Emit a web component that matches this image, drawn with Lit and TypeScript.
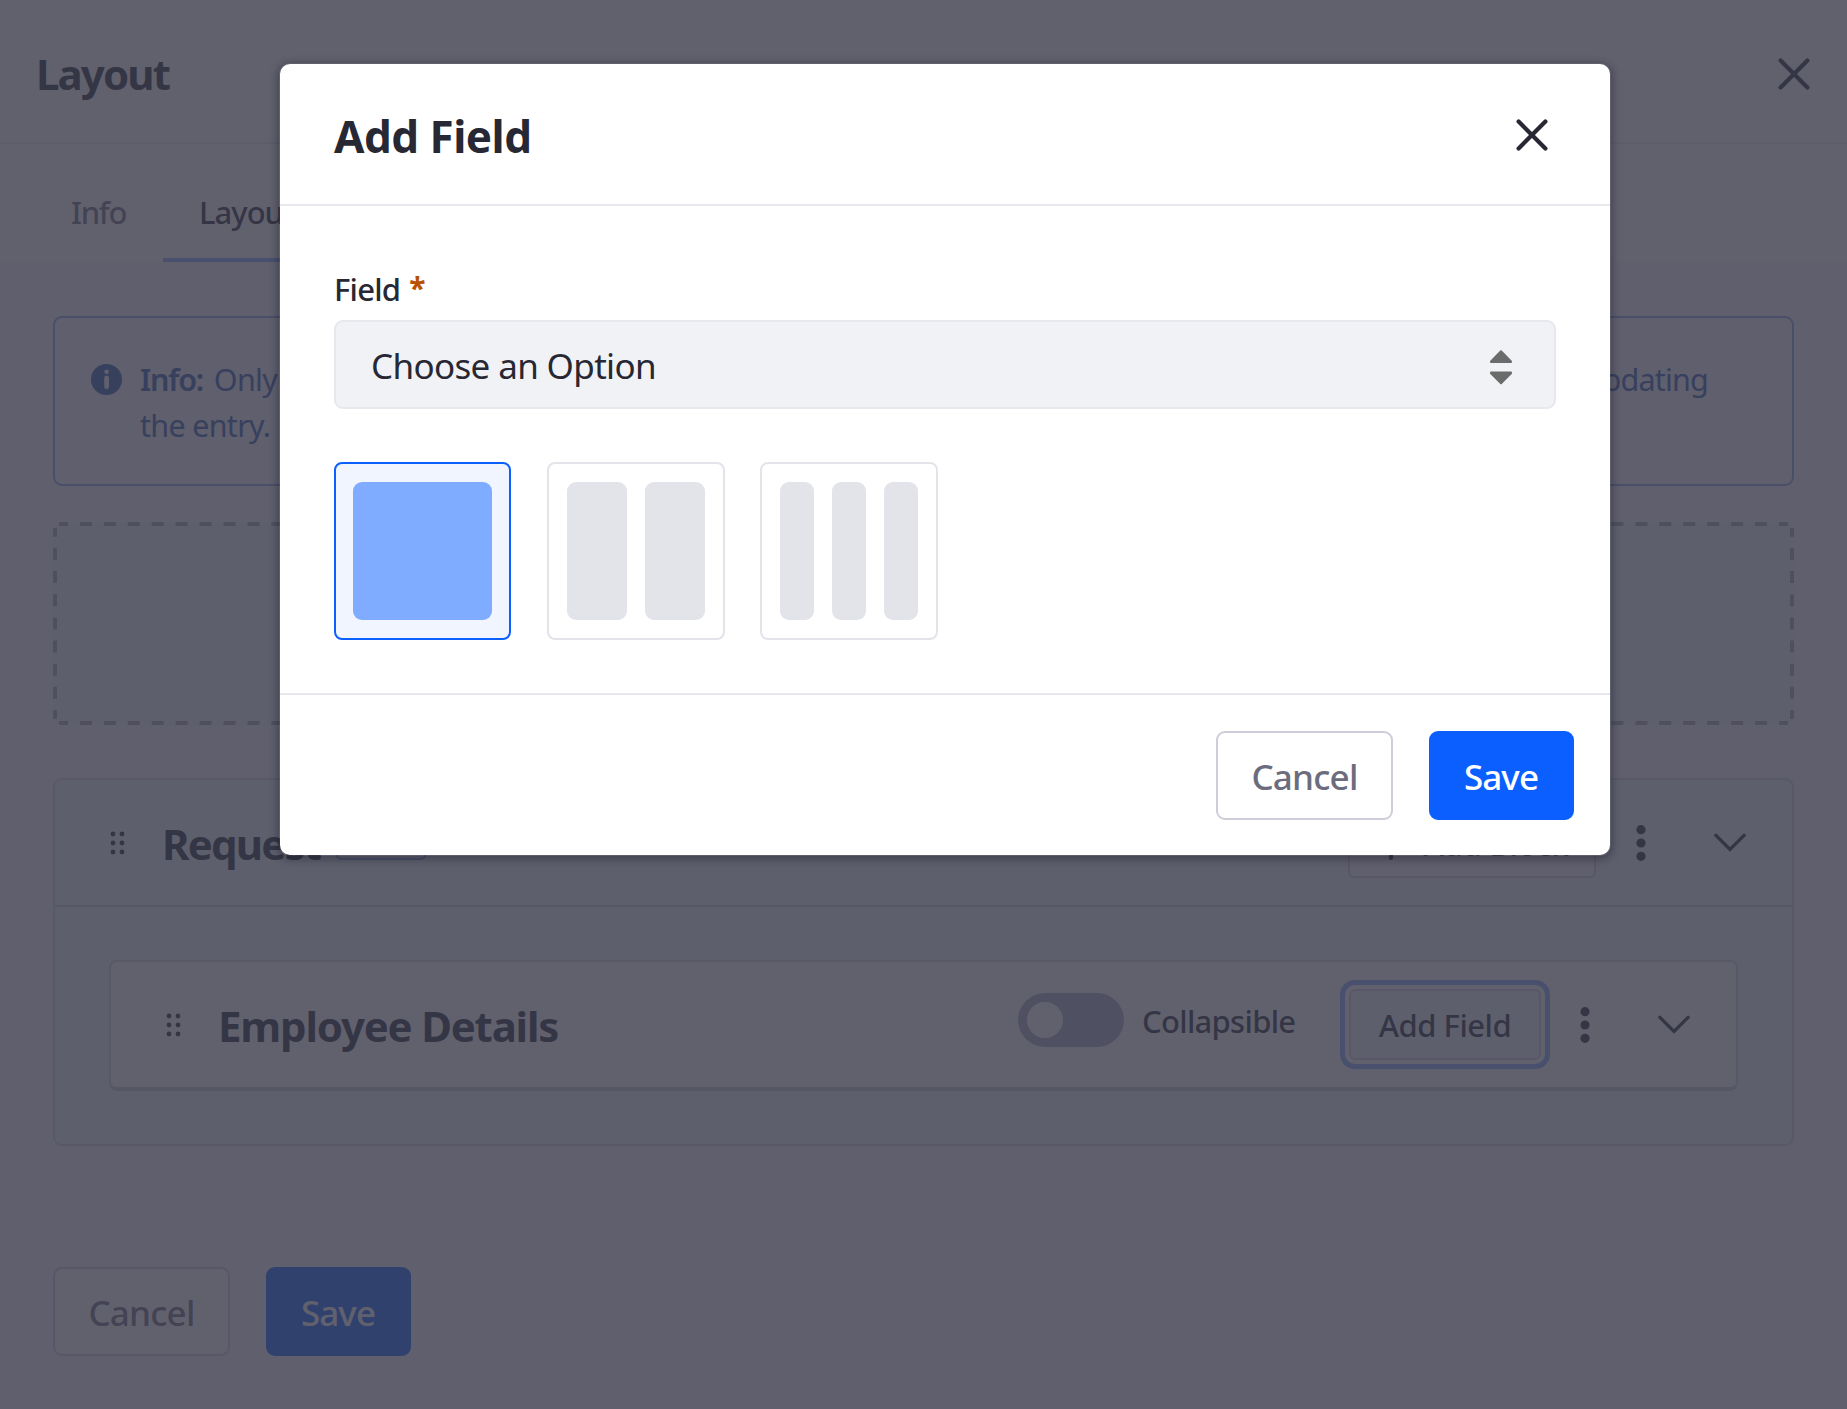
import { LitElement, html, css, svg } from 'lit';
import { customElement, property, state } from 'lit/decorators.js';
import { classMap } from 'lit/directives/class-map.js';

const closeIcon = html`<svg class="icon-close" width="32" height="32" viewBox="0 0 32 32" fill="none" stroke="currentColor" stroke-width="4.2" stroke-linecap="round">
  <path d="M2.6 2.6 29.4 29.4M29.4 2.6 2.6 29.4" />
</svg>`;

const infoIcon = html`<svg class="icon-info" width="31" height="31" viewBox="0 0 31 31">
  <circle cx="15.5" cy="15.5" r="15.5" fill="currentColor" />
  <circle class="cutout" cx="15.6" cy="7.8" r="2.3" />
  <rect class="cutout" x="13.2" y="11.6" width="4.8" height="13.6" rx="2.4" />
</svg>`;

const dragIcon = html`<svg width="16" height="24" viewBox="0 0 16 24" fill="currentColor">
  ${[3, 12, 21].map((y) => svg`<circle cx="3" cy=${y} r="2.4" /><circle cx="12" cy=${y} r="2.4" />`)}
</svg>`;

const kebabIcon = html`<svg width="10" height="36" viewBox="0 0 10 36" fill="currentColor">
  ${[4.7, 18, 31.3].map((y) => svg`<circle cx="5" cy=${y} r="4.6" />`)}
</svg>`;

const chevronIcon = html`<svg width="32" height="20" viewBox="0 0 32 20" fill="none" stroke="currentColor" stroke-width="3.4" stroke-linecap="round" stroke-linejoin="miter">
  <path d="M1.9 2.4 16 16.4 30.1 2.4" />
</svg>`;

const plusIcon = html`<svg width="32" height="34" viewBox="0 0 32 34" stroke="currentColor" stroke-width="4" stroke-linecap="round">
  <path d="M16 2V32M2 17H30" />
</svg>`;

const sortIcon = html`<svg class="icon-sort" width="24" height="36" viewBox="0 0 24 36" fill="#6b6b6b" stroke="#6b6b6b" stroke-width="2" stroke-linejoin="round">
  <path d="M12 2.2 22 12.4V13H2V12.4Z" />
  <path d="M12 34.4 22 24.2V23.6H2V24.2Z" />
</svg>`;

const shared = css`
  * { box-sizing: border-box; }
  svg { display: block; flex: none; }
  .btn {
    display: flex;
    align-items: center;
    justify-content: center;
    height: 89px;
    padding-top: 2px;
    border: 2px solid #cdced9;
    border-radius: 9px;
    background: #fff;
    color: #6b6c7e;
    font: 500 35px/48px "Noto Sans", "Open Sans", sans-serif;
    letter-spacing: -0.8px;
  }
  .btn-cancel { width: 177px; }
  .btn-save {
    width: 145px;
    padding-right: 1px;
    border-color: #0b5fff;
    background: #0b5fff;
    color: #fff;
    letter-spacing: -0.9px;
  }
`;

@customElement('layout-page')
class LayoutPage extends LitElement {
  static styles = [shared, css`
    :host {
      display: flex;
      flex-direction: column;
      height: 100%;
      background: #f6f2f8;
      color: #272833;
    }
    .header {
      display: flex;
      align-items: center;
      justify-content: space-between;
      height: 144px;
      padding: 0 37px 0 36px;
      border-bottom: 2px solid #e3e3ea;
      background: #fff;
    }
    .header-title {
      font-size: 42px;
      font-weight: 700;
      letter-spacing: -1.9px;
      padding-top: 4px;
    }
    .header .icon-close { margin-top: 5px; }
    .tabs {
      display: flex;
      height: 118px;
      background: #fff;
      padding-left: 34px;
      font-size: 31px;
      font-weight: 500;
    }
    .tab {
      padding: 47px 36px 0 37px;
      line-height: 42px;
      color: #6b6c7e;
      border-bottom: 4px solid transparent;
      letter-spacing: -1.3px;
      width: 129px;
    }
    .tab-active {
      width: 164px;
      padding-left: 36px;
      letter-spacing: -1px;
      color: #272833;
      border-color: #80acff;
    }
    .alert {
      display: flex;
      gap: 18px;
      height: 170px;
      margin: 54px 53px 0;
      padding: 38px 36px;
      border: 2px solid #89a7e0;
      border-radius: 9px;
      color: #2e5aac;
      font-size: 30.5px;
      line-height: 46px;
    }
    .alert .icon-info { margin-top: 8px; }
    .cutout { fill: #f6f2f8; }
    .alert-line { display: flex; width: 1568px; letter-spacing: -0.7px; }
    .alert-line strong { font-weight: 600; margin-right: 11px; letter-spacing: -1.3px; }
    .alert-line .last { margin-left: auto; letter-spacing: -0.8px; }
    .dropzone { height: 203px; margin: 36px 53px 0; border-radius: 8px; background: #eef5f9; overflow: hidden; }
    .sheet {
      height: 368px;
      margin: 53px 53px 0;
      border: 2px solid #d3d0dc;
      border-radius: 9px;
      background: #eef5f9;
    }
    .sheet-header {
      display: flex;
      align-items: center;
      height: 127px;
      padding: 0 46px 0 55px;
      border-bottom: 2px solid #ccc9d6;
    }
    .title {
      padding-top: 2px;
      font-size: 42px;
      font-weight: 700;
      letter-spacing: -1.2px;
      margin-left: 36px;
    }
    .sheet-header .title { width: 160px; letter-spacing: -1.8px; }
    .tag { width: 90px; height: 40px; margin-left: 14px; margin-top: -5px; border: 2px solid #89a0dc; border-radius: 5px; }
    .spacer { flex: 1; }
    .btn-sm {
      display: flex;
      align-items: center;
      justify-content: center;
      height: 71px;
      border: 2px solid #cfccd9;
      border-radius: 6px;
      font-size: 31px;
      font-weight: 500;
      letter-spacing: -0.5px;
      padding-top: 1px;
    }
    .btn-block { width: 248px; gap: 16px; background: #f6f2f8; }
    .btn-block span { padding-top: 2px; letter-spacing: -0.2px; }
    .kebab { margin-left: 40px; }
    .chevron { margin-left: 68px; }
    .box {
      height: 131px;
      margin: 53px 54px 0 54px;
      border: 2px solid #d3d0dc;
      border-bottom: 4px solid #c8c5d2;
      border-radius: 8px;
      background: #fff;
    }
    .box-row { display: flex; align-items: center; height: 125px; padding: 0 46px 0 55px; }
    .toggle {
      display: flex;
      align-items: center;
      width: 106px;
      height: 54px;
      margin-top: -9px;
      padding-left: 9px;
      border-radius: 27px;
      background: #a7a9bc;
    }
    .knob { width: 36px; height: 36px; border-radius: 50%; background: #fff; }
    .toggle-label { font-size: 31px; font-weight: 500; letter-spacing: -0.7px; margin: -7px 53px 0 18px; width: 154px; }
    .btn-field {
      width: 192px;
      margin-right: -1px;
      background: #eef5f9;
      box-shadow: 0 0 0 4px #fff, 0 0 0 9px #80acff;
    }
    .actions { display: flex; gap: 36px; margin: 121px 53px 0; }
  `];

  render() {
    return html`
      <div class="header">
        <div class="header-title">Layout</div>
        ${closeIcon}
      </div>
      <div class="tabs">
        <div class="tab">Info</div>
        <div class="tab tab-active">Layout</div>
      </div>
      <div class="alert">
        ${infoIcon}
        <div>
          <div class="alert-line">
            <strong>Info:</strong><span>Only</span><span class="last">updating</span>
          </div>
          <div class="alert-line">the entry.</div>
        </div>
      </div>
      <div class="dropzone">
        <svg width="1741" height="203" viewBox="0 0 1741 203" stroke="#a3a4ba" stroke-width="4">
          <path d="M6 2H1735M6 201H1735" stroke-dasharray="12 11.93" stroke-dashoffset="3" />
          <path d="M2 6V197M1739 6V197" stroke-dasharray="12 11.15" stroke-dashoffset="3.2" />
        </svg>
      </div>
      <div class="sheet">
        <div class="sheet-header">
          ${dragIcon}
          <div class="title">Request</div>
          <div class="tag"></div>
          <div class="spacer"></div>
          <div class="btn-sm btn-block">${plusIcon}<span>Add Block</span></div>
          <div class="kebab">${kebabIcon}</div>
          <div class="chevron">${chevronIcon}</div>
        </div>
        <div class="box">
          <div class="box-row">
            ${dragIcon}
            <div class="title">Employee Details</div>
            <div class="spacer"></div>
            <div class="toggle"><div class="knob"></div></div>
            <div class="toggle-label">Collapsible</div>
            <div class="btn-sm btn-field">Add Field</div>
            <div class="kebab">${kebabIcon}</div>
            <div class="chevron">${chevronIcon}</div>
          </div>
        </div>
      </div>
      <div class="actions">
        <div class="btn btn-cancel">Cancel</div>
        <div class="btn btn-save">Save</div>
      </div>
    `;
  }
}

@customElement('column-tile')
class ColumnTile extends LitElement {
  @property({ type: Number }) columns = 1;
  @property({ type: Boolean }) selected = false;

  static styles = css`
    .tile {
      box-sizing: border-box;
      display: flex;
      gap: 18px;
      width: 178px;
      height: 178px;
      padding: 18px;
      border: 2px solid #e2e4ea;
      border-radius: 8px;
      background: #fff;
    }
    .bar { flex: 1; border-radius: 9px; background: #e2e4e9; }
    .selected { width: 177px; padding: 18px 17px; border-color: #0b5fff; background: #f0f5ff; }
    .selected .bar { background: #80acff; }
  `;

  render() {
    return html`<div class=${classMap({ tile: true, selected: this.selected })}>
      ${Array.from({ length: this.columns }, () => html`<div class="bar"></div>`)}
    </div>`;
  }
}

@customElement('add-field-modal')
class AddFieldModal extends LitElement {
  @state() private selected = 1;

  static styles = [shared, css`
    .modal {
      width: 1334px;
      height: 795px;
      border: 2px solid transparent;
      border-radius: 12px;
      background: #fff;
      background-clip: padding-box;
      box-shadow: 0 2px 9px rgba(20, 20, 30, 0.42);
      color: #272833;
    }
    .modal-header {
      display: flex;
      align-items: center;
      justify-content: space-between;
      height: 142px;
      padding: 0 62px 0 54px;
      border-bottom: 2px solid #e7e7ed;
    }
    .modal-title { padding-top: 4px; font-size: 44px; font-weight: 700; letter-spacing: -0.5px; }
    .modal-header .icon-close { margin-top: 1px; }
    .modal-body { height: 489px; padding: 62px 54px 0; border-bottom: 2px solid #e7e7ed; }
    .label { display: flex; font-size: 31px; font-weight: 500; line-height: 42px; letter-spacing: -0.8px; }
    .required { margin: -1px 0 0 9px; height: 42px; color: #b95000; font-size: 30px; font-weight: 700; }
    .select {
      display: flex;
      align-items: center;
      justify-content: space-between;
      height: 89px;
      margin-top: 10px;
      padding: 2px 41px 0 35px;
      border: 2px solid #e7e7ed;
      border-radius: 9px;
      background: #f1f2f5;
      font-size: 35px;
      letter-spacing: -0.65px;
    }
    .icon-sort { margin-top: 2px; }
    .tiles { display: flex; gap: 35.5px; margin-top: 53px; }
    .modal-footer { display: flex; justify-content: flex-end; gap: 36px; padding: 36px 36px 0; }
  `];

  render() {
    return html`<div class="modal">
      <div class="modal-header">
        <div class="modal-title">Add Field</div>
        ${closeIcon}
      </div>
      <div class="modal-body">
        <div class="label">Field<span class="required">*</span></div>
        <div class="select"><span>Choose an Option</span>${sortIcon}</div>
        <div class="tiles">
          ${[1, 2, 3].map((n) => html`<column-tile
            .columns=${n}
            .selected=${n === this.selected}
            @click=${() => { this.selected = n; }}
          ></column-tile>`)}
        </div>
      </div>
      <div class="modal-footer">
        <div class="btn btn-cancel">Cancel</div>
        <div class="btn btn-save">Save</div>
      </div>
    </div>`;
  }
}

@customElement('app-root')
class AppRoot extends LitElement {
  static styles = css`
    :host {
      display: block;
      position: relative;
      width: 1847px;
      height: 1409px;
      overflow: hidden;
      font-family: "Noto Sans", "Open Sans", sans-serif;
    }
    .backdrop {
      position: absolute;
      inset: 0;
      display: flex;
      justify-content: center;
      align-items: flex-start;
      padding: 62px 0 0 43px;
      background: rgba(57, 58, 74, 0.8);
    }
  `;

  render() {
    return html`
      <layout-page></layout-page>
      <div class="backdrop"><add-field-modal></add-field-modal></div>
    `;
  }
}
